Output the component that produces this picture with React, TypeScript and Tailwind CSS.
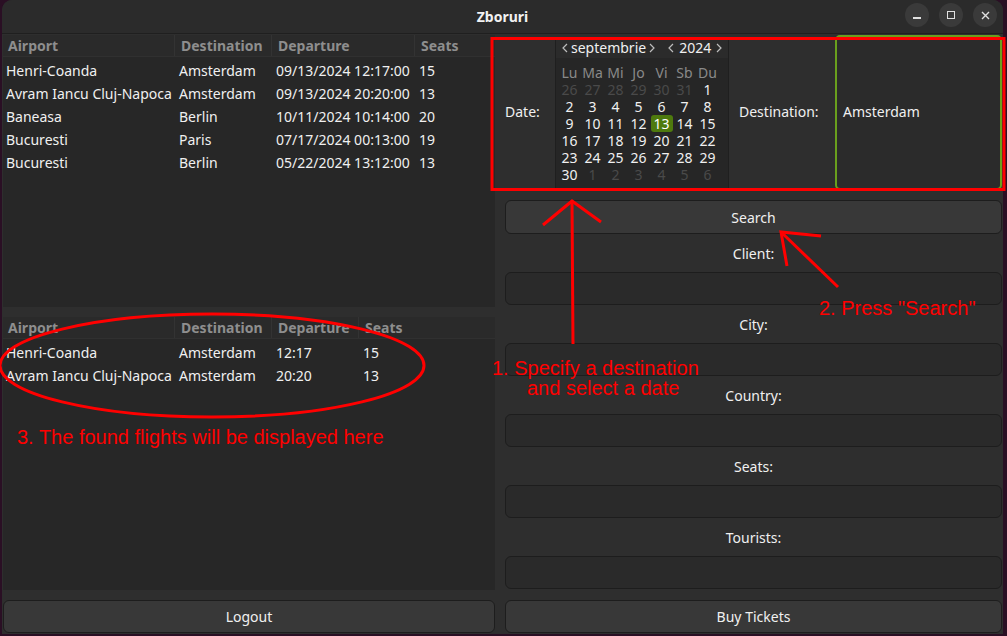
const flights = [
  ["Henri-Coanda", "Amsterdam", "09/13/2024 12:17:00", "15"],
  ["Avram Iancu Cluj-Napoca", "Amsterdam", "09/13/2024 20:20:00", "13"],
  ["Baneasa", "Berlin", "10/11/2024 10:14:00", "20"],
  ["Bucuresti", "Paris", "07/17/2024 00:13:00", "19"],
  ["Bucuresti", "Berlin", "05/22/2024 13:12:00", "13"],
];

const found = [
  ["Henri-Coanda", "Amsterdam", "12:17", "15"],
  ["Avram Iancu Cluj-Napoca", "Amsterdam", "20:20", "13"],
];

const headers = ["Airport", "Destination", "Departure", "Seats"];

const dayNames = ["Lu", "Ma", "Mi", "Jo", "Vi", "Sb", "Du"];

// 6 weeks, [day, inMonth]
const days: [number, boolean][] = [
  ...[26, 27, 28, 29, 30, 31].map((d) => [d, false] as [number, boolean]),
  ...Array.from({ length: 30 }, (_, i) => [i + 1, true] as [number, boolean]),
  ...[1, 2, 3, 4, 5, 6].map((d) => [d, false] as [number, boolean]),
];

const Table = ({ rows, cols }: { rows: string[][]; cols: string }) => (
  <div className="flex flex-col bg-[#272727]">
    <div className={`grid h-[22px] items-center border-b border-[#303030] bg-[#2a2a2a] ${cols}`}>
      {headers.map((h, i) => (
        <div
          key={h}
          className={`flex h-full items-center font-bold text-[#8e8e8e] ${i === 0 ? "pl-[5px]" : "border-l border-[#333333] pl-[6px]"}`}
        >
          {h}
        </div>
      ))}
    </div>
    <div className="pt-[2px]">
      {rows.map((r, ri) => (
        <div key={ri} className={`grid h-[23px] items-center text-[#f0f0f0] ${cols}`}>
          {r.map((c, ci) => (
            <div key={ci} className={`whitespace-nowrap ${ci === 0 ? "pl-[3px]" : "pl-[5px]"}`}>
              {c}
            </div>
          ))}
        </div>
      ))}
    </div>
  </div>
);

const Chevron = ({ left }: { left?: boolean }) => (
  <svg width="6" height="10" viewBox="0 0 6 10" className="shrink-0">
    <polyline
      points={left ? "5,1 1,5 5,9" : "1,1 5,5 1,9"}
      fill="none"
      stroke="#bdbdbd"
      strokeWidth="1.2"
    />
  </svg>
);

const Calendar = () => (
  <div className="flex h-full w-[174px] flex-col border-x border-[#1f1f1f] bg-[#262626]">
    <div className="flex h-[21px] items-center bg-[#2b2b2b] pl-[6px] text-[#f0f0f0]">
      <Chevron left />
      <span className="px-[3px]">septembrie</span>
      <Chevron />
      <span className="w-[13px]" />
      <Chevron left />
      <span className="px-[5px]">2024</span>
      <Chevron />
    </div>
    <div className="grid grid-cols-[repeat(7,23px)] pl-[2px] pt-[6px] leading-[17px]">
      {dayNames.map((d) => (
        <div key={d} className="text-center text-[#8a8a8a]">
          {d}
        </div>
      ))}
      {days.map(([d, inMonth], i) => (
        <div key={i} className="flex justify-center">
          <span
            className={`px-[1px] text-center ${
              !inMonth
                ? "text-[#4a4a4a]"
                : d === 13
                  ? "w-[22px] rounded-[3px] bg-[#4e7a0e] text-white"
                  : "text-[#f0f0f0]"
            }`}
          >
            {d}
          </span>
        </div>
      ))}
    </div>
  </div>
);

const Field = () => <div className="h-[33px] rounded-[6px] border border-[#1d1d1d] bg-[#2a2a2a]" />;

const Label = ({ text }: { text: string }) => (
  <div className="flex h-[38px] items-center justify-center text-[#f0f0f0]">{text}</div>
);

const Button = ({ text }: { text: string }) => (
  <div className="flex h-[33px] items-center justify-center rounded-[6px] border border-[#1d1d1d] bg-[#383838] text-[#f0f0f0]">
    {text}
  </div>
);

const Annotations = () => (
  <svg className="pointer-events-none absolute inset-0" width="1007" height="636" viewBox="0 0 1007 636">
    <g fill="none" stroke="#ff0000" strokeWidth="3">
      <rect x="492" y="38.5" width="512" height="151" />
      <line x1="573" y1="344" x2="572" y2="201" />
      <polyline points="543,225 572,201 601,222" />
      <line x1="838" y1="287" x2="781" y2="232" />
      <polyline points="821,236 781,232 787,266" />
      <ellipse cx="212" cy="365.5" rx="212" ry="51.5" />
    </g>
    <g fill="#ff0000" fontFamily='"Liberation Sans", Arial, sans-serif' fontSize="20">
      <text x="492" y="375">1. Specify a destination</text>
      <text x="527" y="395">and select a date</text>
      <text x="819" y="315">2. Press "Search"</text>
      <text x="17" y="444">3. The found flights will be displayed here</text>
    </g>
  </svg>
);

export default function App() {
  return (
    <div
      className="relative h-[636px] w-[1007px] overflow-hidden bg-[#2a0f24] text-[14px]"
      style={{ fontFamily: '"Noto Sans", "DejaVu Sans", sans-serif' }}
    >
      <div className="ml-[2px] flex h-[634px] w-[1001px] flex-col overflow-hidden rounded-t-[10px] bg-[#2e2e2e]">
        {/* title bar */}
        <div className="relative flex h-[34px] shrink-0 items-center justify-center border-b border-[#1f1f1f] bg-[#2b2b2b]">
          <span className="text-[14px] font-bold text-[#f2f2f2]">Zboruri</span>
          <div className="absolute right-[6px] top-[3px] flex gap-[10px]">
            <div className="flex h-[24px] w-[24px] items-center justify-center rounded-full bg-[#3a3a3a]">
              <div className="mt-[6px] h-[1.5px] w-[8px] bg-[#e0e0e0]" />
            </div>
            <div className="flex h-[24px] w-[24px] items-center justify-center rounded-full bg-[#3a3a3a]">
              <div className="h-[8px] w-[8px] border border-[#e0e0e0]" />
            </div>
            <div className="flex h-[24px] w-[24px] items-center justify-center rounded-full bg-[#3a3a3a]">
              <svg width="9" height="9" viewBox="0 0 9 9">
                <path d="M1 1L8 8M8 1L1 8" stroke="#e0e0e0" strokeWidth="1.4" />
              </svg>
            </div>
          </div>
        </div>

        <div className="flex flex-1 gap-[10px] px-[1px] pb-[1px] pt-[1px]">
          {/* left */}
          <div className="flex w-[492px] flex-col">
            <div className="h-[272px] bg-[#272727]">
              <Table rows={flights} cols="grid-cols-[171px_97px_143px_1fr]" />
            </div>
            <div className="mt-[10px] h-[273px] bg-[#272727]">
              <Table rows={found} cols="grid-cols-[171px_97px_87px_1fr]" />
            </div>
            <div className="mt-[10px]">
              <Button text="Logout" />
            </div>
          </div>

          {/* right */}
          <div className="flex w-[497px] flex-col">
            <div className="flex h-[155px] items-stretch">
              <div className="flex w-[50px] items-center pb-[2px] text-[#f0f0f0]">Date:</div>
              <div className="pt-[2px]">
                <Calendar />
              </div>
              <div className="flex w-[106px] items-center pb-[2px] pl-[10px] text-[#f0f0f0]">Destination:</div>
              <div className="flex flex-1 items-center rounded-[5px] border-2 border-solid border-[#6a9f1d] bg-[#2b2b2b] pb-[2px] pl-[6px] text-[#f0f0f0]">
                Amsterdam
              </div>
            </div>
            <div className="mt-[10px]">
              <div className="flex h-[34px] items-center justify-center rounded-[6px] border border-[#1d1d1d] bg-[#383838] text-[#f0f0f0]">
                Search
              </div>
            </div>
            <Label text="Client:" />
            <Field />
            <Label text="City:" />
            <Field />
            <Label text="Country:" />
            <Field />
            <Label text="Seats:" />
            <Field />
            <Label text="Tourists:" />
            <Field />
            <div className="mt-[11px]">
              <Button text="Buy Tickets" />
            </div>
          </div>
        </div>
      </div>
      <Annotations />
    </div>
  );
}
